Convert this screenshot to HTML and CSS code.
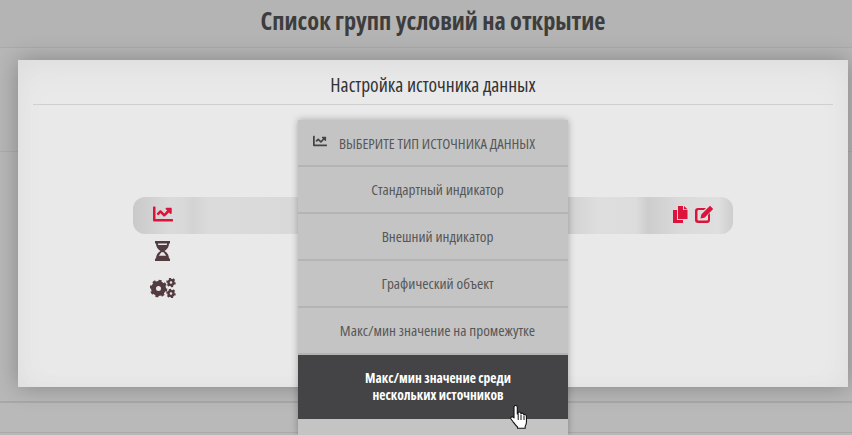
FILE: index.html
```html
<!DOCTYPE html>
<html lang="ru">
<head>
<meta charset="utf-8">
<title>Настройка источника данных</title>
<link rel="stylesheet" href="styles.css">
</head>
<body>
<header class="page-header"><h1 class="page-title">Список групп условий на открытие</h1></header>
<div class="band band-a"></div>
<div class="band band-b"></div>
<div class="band band-c"></div>

<section class="modal">
  <h2 class="modal-title">Настройка источника данных</h2>
  <div class="source-row">
    <span class="row-cell row-cell-left">
      <svg class="icon icon-red" viewBox="0 0 512 512"><path d="M496 384H64V80c0-8.84-7.16-16-16-16H16C7.16 64 0 71.16 0 80v336c0 17.67 14.33 32 32 32h464c8.84 0 16-7.16 16-16v-32c0-8.84-7.16-16-16-16zM464 96H345.94c-21.38 0-32.09 25.85-16.97 40.97l32.4 32.4L288 242.75l-73.37-73.37c-12.5-12.5-32.76-12.5-45.25 0l-68.69 68.69c-6.25 6.25-6.25 16.38 0 22.63l22.62 22.62c6.25 6.25 16.38 6.25 22.63 0L192 237.25l73.37 73.37c12.5 12.5 32.76 12.5 45.25 0l96-96 32.4 32.4c15.12 15.12 40.97 4.41 40.97-16.97V112c0-8.84-7.16-16-16-16z"/></svg>
    </span>
    <span class="row-cell row-cell-right">
      <svg class="icon-copy" viewBox="0 0 15 17"><path d="M5 0h5v4h4.500v9H5z M11 0l3.500 3.200H11z M0 4h4v10h6v3H0z"/></svg>
      <svg class="icon-edit" viewBox="0 0 19 18"><path d="M2 3h9l-2 2H3.500a1 1 0 0 0-1 1v8.500a1 1 0 0 0 1 1H12a1 1 0 0 0 1-1V10l2-2v7a3 3 0 0 1-3 3H3a3 3 0 0 1-3-3V6a3 3 0 0 1 3-3z M15 0.800l3.200 3.200-8.700 8.700-4 .8.800-4z"/></svg>
    </span>
  </div>
  <div class="side-icons">
    <svg class="icon-hourglass" viewBox="0 0 15 20"><path fill-rule="evenodd" d="M0 0h15v2.500h-1c0 3-1.500 6-4.500 7.500 3 1.500 4.500 4.500 4.500 7.500h1V20H0v-2.500h1c0-3 1.500-6 4.500-7.500C2.500 8.500 1 5.500 1 2.500H0z M3 2.500c0 .5.100 1 .2 1.500h8.600c.1-.5.200-1 .2-1.500z M6.300 11.200h2.400l2.500 3.600H3.800z"/></svg>
    <svg class="icon-cogs" viewBox="0 0 26 20">
      <circle class="cog-ring" cx="8.500" cy="10.500" r="5"/>
      <circle class="cog-teeth" cx="8.500" cy="10.500" r="7.300" pathLength="32" stroke-dasharray="2 2"/>
      <circle class="cog-ring-sm" cx="21" cy="4.500" r="2.500"/>
      <circle class="cog-teeth-sm" cx="21" cy="4.500" r="3.900" pathLength="24" stroke-dasharray="2 2"/>
      <circle class="cog-ring-sm" cx="21" cy="15.500" r="2.500"/>
      <circle class="cog-teeth-sm" cx="21" cy="15.500" r="3.900" pathLength="24" stroke-dasharray="2 2"/>
    </svg>
  </div>
</section>

<nav class="dropdown">
  <div class="dd-head">
    <svg class="dd-head-icon" viewBox="0 0 512 512"><path d="M496 384H64V80c0-8.84-7.16-16-16-16H16C7.16 64 0 71.16 0 80v336c0 17.67 14.33 32 32 32h464c8.84 0 16-7.16 16-16v-32c0-8.84-7.16-16-16-16zM464 96H345.94c-21.38 0-32.09 25.85-16.97 40.97l32.4 32.4L288 242.75l-73.37-73.37c-12.5-12.5-32.76-12.5-45.25 0l-68.69 68.69c-6.25 6.25-6.25 16.38 0 22.63l22.62 22.62c6.25 6.25 16.38 6.25 22.63 0L192 237.25l73.37 73.37c12.5 12.5 32.76 12.5 45.25 0l96-96 32.4 32.4c15.12 15.12 40.97 4.41 40.97-16.97V112c0-8.84-7.16-16-16-16z"/></svg>
    <span class="dd-head-text">ВЫБЕРИТЕ ТИП ИСТОЧНИКА ДАННЫХ</span>
  </div>
  <a class="dd-item">Стандартный индикатор</a>
  <a class="dd-item">Внешний индикатор</a>
  <a class="dd-item">Графический объект</a>
  <a class="dd-item">Макс/мин значение на промежутке</a>
  <a class="dd-item dd-item-active">Макс/мин значение среди<br>нескольких источников</a>
  <div class="dd-rest"></div>
</nav>

<svg class="cursor" viewBox="0 0 18 26"><path d="M5.500 1.500c1 0 1.800.8 1.800 1.800V10l.7-.3V8.500c.9-.8 2.200-.6 2.600.4l.4.7c.9-.8 2.200-.5 2.600.5l.3.6c1-.5 2.400 0 2.500 1.300l.1 5.500c0 2.200-.6 3.600-1.300 4.800v2H7.500v-1.300c-1.500-1.200-2.800-3-4.300-5L1 15c-.8-1.200.3-2.500 1.600-2.100l1.400 1V3.300c0-1 .6-1.800 1.500-1.800z" fill="#fff" stroke="#111" stroke-width="1.100" stroke-linejoin="round"/><path d="M8.200 10v6M11 10.500V16M14 11.500V16" stroke="#111" stroke-width="1" fill="none"/></svg>
</body>
</html>
```
FILE: styles.css
```css
* { box-sizing: border-box; }
html, body { margin: 0; height: 435px; overflow: hidden; }
body {
  background: #b8b8b8;
  font-family: "Open Sans", "Noto Sans", sans-serif;
  font-stretch: 75%;
  color: #444;
}
.page-header {
  height: 48px;
  padding-left: 14px;
  background: #b4b4b4;
  border-bottom: 1px solid #ababab;
  display: flex;
  align-items: center;
  justify-content: center;
}
.page-title {
  margin: 0 0 7px;
  font-size: 24.3px;
  font-weight: 700;
  color: #3d3d3d;
}
.band { border-bottom: 1px solid #adadad; }
.band-a { height: 104px; background: #b7b7b7; }
.band-b { height: 251px; background: #b8b8b8; border-bottom-color: #a8a8a8; border-bottom-width: 2px; }
.band-c { height: 30px; background: #b9b9b9; border-bottom-color: #a9a9a9; }

.modal {
  position: absolute;
  left: 18px;
  top: 60px;
  width: 830px;
  height: 327px;
  padding: 0 15px;
  background: #e9e9e9;
  box-shadow: 0 0 22px rgba(0, 0, 0, .28), inset 0 10px 34px rgba(0, 0, 0, .035), inset 0 0 24px rgba(0, 0, 0, .025);
}
.modal-title {
  margin: 0;
  height: 45px;
  padding-top: 13px;
  border-bottom: 1px solid #cfcfcf;
  text-align: center;
  font-size: 19.5px;
  line-height: 24px;
  font-weight: 400;
  color: #333;
}
.source-row {
  margin: 92px 0 0 100px;
  width: 600px;
  height: 37px;
  border-radius: 12px;
  background: linear-gradient(90deg, #c9c9c9 0, #dadada 36px, #d9d9d9 50px, #d3d3d3 60px, #dbdbdb 76px, #d2d2d2 437px, #dedede 465px, #dcdcdc 503px, #cdcdcd 515px, #dadada 547px, #dfdfdf 585px, #cdcdcd 600px);
  display: flex;
  justify-content: space-between;
}
.row-cell { display: flex; align-items: center; height: 100%; }
.row-cell-left { padding-left: 20px; }
.row-cell-right { padding-right: 19px; gap: 7px; }
.icon-red { width: 20px; height: 20px; fill: #dc143c; margin-top: -3px; }
.icon-copy { width: 15px; height: 17px; fill: #dc143c; margin-top: -3px; }
.icon-edit { width: 19px; height: 18px; fill: #dc143c; margin-top: -3px; }
.side-icons {
  margin-left: 100px;
  width: 60px;
  padding-left: 17px;
  display: flex;
  flex-direction: column;
}
.icon-hourglass { width: 15px; height: 20px; fill: #523c40; margin: 7px 0 0 5px; }
.icon-cogs { width: 26px; height: 20px; margin: 17px 0 0 0; }
.cog-ring { fill: none; stroke: #523c40; stroke-width: 5; }
.cog-teeth { fill: none; stroke: #523c40; stroke-width: 3; }
.cog-ring-sm { fill: none; stroke: #523c40; stroke-width: 2.400; }
.cog-teeth-sm { fill: none; stroke: #523c40; stroke-width: 1.800; }

.dropdown {
  position: absolute;
  left: 298px;
  top: 120px;
  width: 270px;
  height: 315px;
  background: #c4c4c4;
  box-shadow: 0 0 7px rgba(0, 0, 0, .3);
  display: flex;
  flex-direction: column;
  overflow: hidden;
  font-size: 15.2px;
  color: #575757;
}
.dd-head {
  flex: none;
  height: 47px;
  padding-left: 15px;
  border-bottom: 2px solid #b4b4b4;
  display: flex;
  align-items: center;
  gap: 12px;
  font-size: 14.8px;
}
.dd-head-text { white-space: nowrap; }
.dd-head-icon { width: 14px; height: 14px; fill: #444; margin-top: -3px; }
.dd-item {
  flex: none;
  height: 47px;
  padding: 0 0 2px 9px;
  border-bottom: 2px solid #b4b4b4;
  display: flex;
  align-items: center;
  justify-content: center;
  text-align: center;
}
.dd-item-active {
  height: 64px;
  padding: 0 0 0 10px;
  border-bottom: 0;
  background: #444446;
  color: #fff;
  font-size: 13.5px;
  font-weight: 700;
  line-height: 17px;
}
.dd-rest { flex: 1; }
.cursor {
  position: absolute;
  left: 510px;
  top: 404px;
  width: 18px;
  height: 26px;
}
```
